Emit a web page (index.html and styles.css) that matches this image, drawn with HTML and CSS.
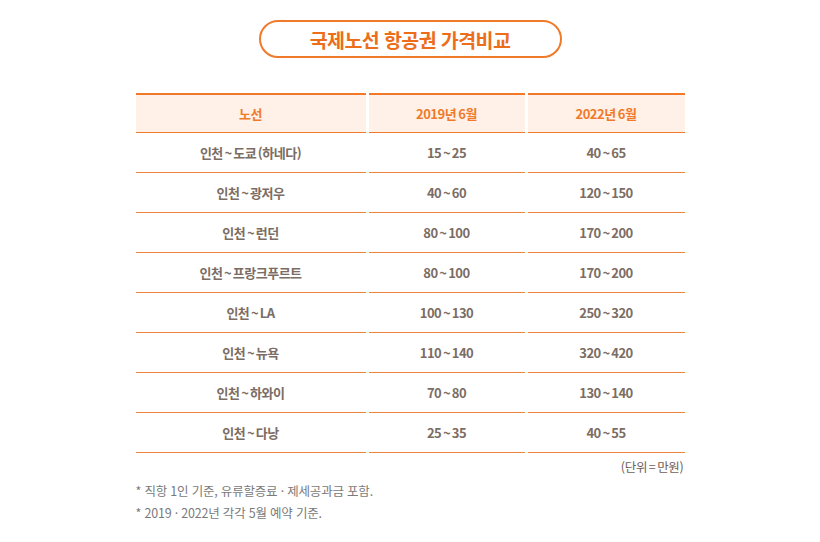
FILE: index.html
```html
<!DOCTYPE html>
<html lang="ko">
<head>
<meta charset="utf-8">
<link rel="stylesheet" href="styles.css">
</head>
<body>
<div class="page">
  <div class="title-wrap"><h1 class="title">국제노선 항공권 가격비교</h1></div>
  <div class="table">
    <div class="cell head">노선</div>
    <div class="cell head">2019년 6월</div>
    <div class="cell head">2022년 6월</div>

    <div class="cell">인천 ~ 도쿄 (하네다)</div>
    <div class="cell">15 ~ 25</div>
    <div class="cell">40 ~ 65</div>

    <div class="cell">인천 ~ 광저우</div>
    <div class="cell">40 ~ 60</div>
    <div class="cell">120 ~ 150</div>

    <div class="cell">인천 ~ 런던</div>
    <div class="cell">80 ~ 100</div>
    <div class="cell">170 ~ 200</div>

    <div class="cell">인천 ~ 프랑크푸르트</div>
    <div class="cell">80 ~ 100</div>
    <div class="cell">170 ~ 200</div>

    <div class="cell">인천 ~ LA</div>
    <div class="cell">100 ~ 130</div>
    <div class="cell">250 ~ 320</div>

    <div class="cell">인천 ~ 뉴욕</div>
    <div class="cell">110 ~ 140</div>
    <div class="cell">320 ~ 420</div>

    <div class="cell">인천 ~ 하와이</div>
    <div class="cell">70 ~ 80</div>
    <div class="cell">130 ~ 140</div>

    <div class="cell">인천 ~ 다낭</div>
    <div class="cell">25 ~ 35</div>
    <div class="cell">40 ~ 55</div>
  </div>
  <div class="unit">(단위 = 만원)</div>
  <ul class="notes">
    <li>* 직항 1인 기준, 유류할증료 · 제세공과금 포함.</li>
    <li>* 2019 · 2022년 각각 5월 예약 기준.</li>
  </ul>
</div>
</body>
</html>
```

FILE: styles.css
```css
html, body {
  margin: 0;
  padding: 0;
  background: #ffffff;
}
body {
  font-family: "Noto Sans CJK KR", "Noto Sans", sans-serif;
  color: #6e6058;
}
.page {
  width: 549px;
  margin: 0 auto;
  padding-top: 20px;
}
.title-wrap {
  display: flex;
  justify-content: center;
}
.title {
  margin: 0;
  width: 299px;
  height: 34px;
  border: 2px solid #f07a2a;
  border-radius: 19px;
  display: flex;
  align-items: center;
  justify-content: center;
  font-size: 19.5px;
  font-weight: 700;
  color: #ec6e1a;
  letter-spacing: -0.6px;
}
.table {
  margin-top: 35px;
  display: grid;
  grid-template-columns: 230px 156px 157px;
  column-gap: 3px;
}
.cell {
  height: 39px;
  border-bottom: 1px solid #ee8440;
  display: flex;
  align-items: center;
  justify-content: center;
  font-size: 13px;
  font-weight: 700;
  letter-spacing: -0.5px;
  word-spacing: -1.5px;
  color: #7b6d64;
}
.head {
  height: 37px;
  border-top: 2px solid #f07a2a;
  border-bottom: 1.5px solid #f07a2a;
  background: #fff1e7;
  color: #f07a2a;
  word-spacing: -1px;
}
.unit {
  text-align: right;
  font-size: 12.5px;
  color: #6e6058;
  margin-top: 4px;
  padding-right: 1px;
  letter-spacing: -0.3px;
  word-spacing: -1.5px;
}
.notes {
  list-style: none;
  margin: 4px 0 0 0;
  padding: 0;
  font-size: 12.5px;
  color: #7a7a7a;
  line-height: 22px;
  letter-spacing: -0.2px;
}
```
